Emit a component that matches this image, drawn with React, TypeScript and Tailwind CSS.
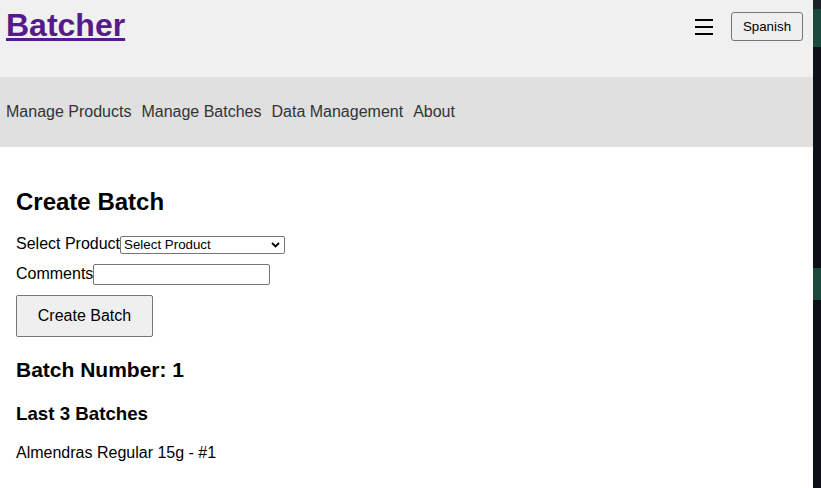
import React from 'react';

const NAV_LINKS = ['Manage Products', 'Manage Batches', 'Data Management', 'About'];

const Header = () => (
  <header className="flex items-start h-[77px] bg-[#f0f0f0] pl-[6px] pr-[10px]">
    <a href="#" className="mt-[7px] text-[32px] leading-[37px] font-bold text-[#551a8b] underline">
      Batcher
    </a>
    <div className="ml-auto flex items-start">
      {/* hamburger */}
      <div className="mt-[19px] flex flex-col gap-[5px] w-[18px]">
        <div className="h-[2px] bg-black" />
        <div className="h-[2px] bg-black" />
        <div className="h-[2px] bg-black" />
      </div>
      <button className="ml-[18px] mt-[12px] w-[72px] h-[29px] border border-[#767676] rounded-[3px] bg-[#efefef] text-[13.33px] text-black">
        Spanish
      </button>
    </div>
  </header>
);

const Nav = () => (
  <nav className="flex items-center gap-[10px] h-[70px] bg-[#e0e0e0] pl-[6px]">
    {NAV_LINKS.map((l) => (
      <a key={l} href="#" className="text-[16px] leading-[18px] text-[#333]">
        {l}
      </a>
    ))}
  </nav>
);

export default function App() {
  return (
    <div className="flex w-[821px] min-h-[488px] bg-white" style={{ fontFamily: '"Liberation Sans", Arial, sans-serif' }}>
      <div className="w-[813px] shrink-0">
        <Header />
        <Nav />

        <main className="pl-[16px] pt-[41px] text-black">
          <h2 className="text-[24px] leading-[28px] font-bold">Create Batch</h2>

          {/* product select row */}
          <div className="mt-[19px] flex items-baseline">
            <label className="text-[16px] leading-[18px]">Select Product</label>
            <div className="inline-flex items-center justify-between w-[165px] h-[18px] border border-[#767676] rounded-[2px] bg-white pl-[3px] pr-[4px] text-[13.33px] leading-[15px]">
              <span>Select Product</span>
              <svg width="9" height="6" viewBox="0 0 9 6" fill="none">
                <path d="M1 1l3.5 3.5L8 1" stroke="black" strokeWidth="1.8" />
              </svg>
            </div>
          </div>

          {/* comments row */}
          <div className="mt-[10px] flex items-center">
            <label className="text-[16px] leading-[18px]">Comments</label>
            <input className="w-[177px] h-[21px] border border-[#767676] rounded-[2px] bg-white outline-none" />
          </div>

          <button className="mt-[10px] w-[137px] h-[42px] border border-[#767676] rounded-[2px] bg-[#efefef] text-[16px] text-black">
            Create Batch
          </button>

          <h2 className="mt-[21px] text-[21px] leading-[24px] font-bold">Batch Number: 1</h2>

          <h3 className="mt-[21px] text-[18.72px] leading-[22px] font-bold">Last 3 Batches</h3>

          <ul className="mt-[19px]">
            <li className="text-[16px] leading-[18px]">Almendras Regular 15g - #1</li>
          </ul>
        </main>
      </div>

      {/* edge of a neighbouring window */}
      <div className="w-[8px] shrink-0 flex flex-col bg-[#0d1117]">
        <div className="h-[9px] bg-[#1c2128]" />
        <div className="h-[38px] bg-[#1a4a3c]" />
        <div className="h-[221px]" />
        <div className="h-[32px] bg-[#1a4a3c]" />
      </div>
    </div>
  );
}
